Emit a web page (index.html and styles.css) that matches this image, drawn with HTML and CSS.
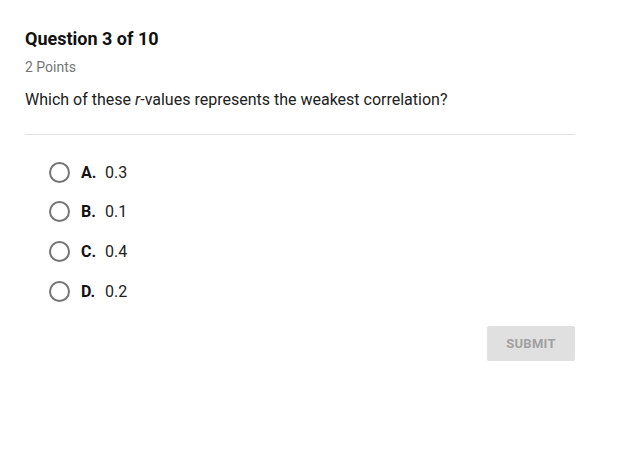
FILE: index.html
```html
<!DOCTYPE html>
<html>
<head>
<meta charset="utf-8">
<link rel="stylesheet" href="styles.css">
</head>
<body>
<div class="quiz">
  <h1 class="title">Question 3 of 10</h1>
  <div class="points">2 Points</div>
  <p class="prompt">Which of these <i>r</i>-values represents the weakest correlation?</p>
  <hr class="divider">
  <ul class="options">
    <li class="option"><span class="radio"></span><b class="letter">A.</b><span class="value">0.3</span></li>
    <li class="option"><span class="radio"></span><b class="letter">B.</b><span class="value">0.1</span></li>
    <li class="option"><span class="radio"></span><b class="letter">C.</b><span class="value">0.4</span></li>
    <li class="option"><span class="radio"></span><b class="letter">D.</b><span class="value">0.2</span></li>
  </ul>
  <div class="actions"><button class="submit">SUBMIT</button></div>
</div>
</body>
</html>
```
FILE: styles.css
```css
html, body {
  margin: 0;
  padding: 0;
  background: #ffffff;
  font-family: Roboto, "Liberation Sans", sans-serif;
  color: #212121;
}
.quiz {
  width: 550px;
  padding: 29px 0 0 25px;
}
.title {
  margin: 0;
  font-size: 18px;
  line-height: 20px;
  font-weight: 700;
  color: #111;
}
.points {
  margin-top: 10px;
  font-size: 14px;
  line-height: 16px;
  color: #757575;
}
.prompt {
  margin: 15px 0 0;
  font-size: 16px;
  line-height: 19px;
  color: #212121;
}
.divider {
  margin: 25px 0 0;
  border: 0;
  border-top: 1px solid #e0e0e0;
  height: 0;
}
.options {
  list-style: none;
  margin: 0;
  padding: 27px 0 0 24px;
  display: flex;
  flex-direction: column;
  gap: 19.7px;
}
.option {
  display: flex;
  align-items: center;
  height: 20px;
  font-size: 16px;
  color: #212121;
}
.radio {
  width: 17px;
  height: 17px;
  border: 2px solid #757575;
  border-radius: 50%;
  margin-right: 11px;
  flex: none;
}
.letter {
  font-weight: 700;
  width: 24px;
  color: #111;
}
.actions {
  display: flex;
  justify-content: flex-end;
  margin-top: 25px;
}
.submit {
  width: 88px;
  height: 35px;
  border: 0;
  border-radius: 2px;
  background: #e0e0e0;
  color: #a0a0a0;
  font-family: Roboto, "Liberation Sans", sans-serif;
  font-size: 13px;
  font-weight: 700;
  letter-spacing: 0.3px;
}
```
